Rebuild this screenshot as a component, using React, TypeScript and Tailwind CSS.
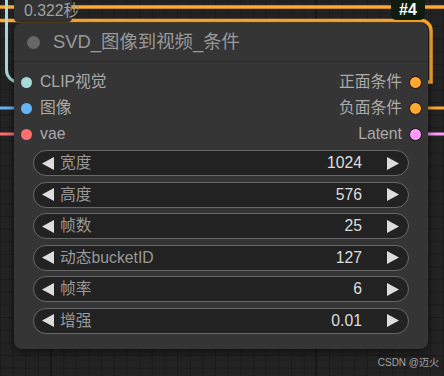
import React from "react";

const FONT = { fontFamily: '"Liberation Sans", Arial, "Noto Sans CJK SC", sans-serif' };

const inputs = [
  { label: "CLIP视觉", color: "#A8DADC" },
  { label: "图像", color: "#64B5F6" },
  { label: "vae", color: "#FF6E6E" },
];
const outputs = [
  { label: "正面条件", color: "#FFA931" },
  { label: "负面条件", color: "#FFA931" },
  { label: "Latent", color: "#FF9CF9" },
];
const widgets = [
  { label: "宽度", value: "1024" },
  { label: "高度", value: "576" },
  { label: "帧数", value: "25" },
  { label: "动态bucketID", value: "127" },
  { label: "帧率", value: "6" },
  { label: "增强", value: "0.01" },
];

function LeftArrow() {
  return (
    <svg width="12" height="13" viewBox="0 0 12 13" className="shrink-0">
      <polygon points="12,0 12,13 0,6.5" fill="#dddddd" />
    </svg>
  );
}
function RightArrow() {
  return (
    <svg width="12" height="13" viewBox="0 0 12 13" className="shrink-0">
      <polygon points="0,0 0,13 12,6.5" fill="#dddddd" />
    </svg>
  );
}

export default function App() {
  return (
    <div className="relative w-[444px] h-[376px] overflow-hidden bg-[#232323]" style={FONT}>
      {/* canvas grid + links */}
      <svg className="absolute inset-0" width="444" height="376">
        <defs>
          <pattern id="grid" width="12.65" height="12.65" patternUnits="userSpaceOnUse" x="0" y="0.8">
            <path d="M0.5 0 V12.65 M0 0.5 H12.65" stroke="#1b1b1b" strokeWidth="1" fill="none" />
          </pattern>
        </defs>
        <rect width="444" height="376" fill="#232323" />
        <rect width="444" height="376" fill="url(#grid)" />
        <path d="M51 0 V376 M316 0 V376" stroke="#181818" strokeWidth="2" />
        {/* links */}
        <path d="M0 7 H444" stroke="#FFA931" strokeWidth="3.5" fill="none" />
        <path d="M0 20.5 H421 A10 10 0 0 1 431 30.5 V82 H415" stroke="#FFA931" strokeWidth="3.5" fill="none" />
        <path d="M6.5 0 V70 A12 12 0 0 0 18.5 82 H26" stroke="#A8DADC" strokeWidth="3" fill="none" />
        <path d="M0 108 H26" stroke="#64B5F6" strokeWidth="3" fill="none" />
        <path d="M0 134 H26" stroke="#FF6E6E" strokeWidth="3" fill="none" />
        <path d="M415 108 H444" stroke="#FFA931" strokeWidth="3" fill="none" />
        <path d="M415 134 H444" stroke="#FF9CF9" strokeWidth="3" fill="none" />
      </svg>

      {/* execution time label */}
      <div className="absolute left-[14px] top-0 w-[58px] h-[22px] bg-[#333333] rounded-b-[4px]" />
      <div className="absolute left-[24px] top-[2px] text-[15.75px] leading-[18px] text-[#a0a0a0] whitespace-nowrap">
        0.322秒
      </div>

      {/* node id badge */}
      <div className="absolute left-[391px] top-0 w-[34px] h-[20px] bg-[#0e1d0e] rounded-b-[5px] flex items-center justify-center">
        <span className="text-white font-bold text-[16px] leading-[16px]">#4</span>
      </div>

      {/* node */}
      <div className="absolute left-[14px] top-[23px] w-[414px] h-[326px] rounded-[8px] bg-[#353535] shadow-[0_3px_8px_rgba(0,0,0,0.55)] flex flex-col">
        <div className="h-[39px] flex items-center border-b border-[#2b2b2b] shrink-0">
          <div className="ml-[13px] w-[13px] h-[13px] rounded-full bg-[#676767]" />
          <span className="ml-[13px] text-[18.4px] leading-[20px] text-[#999999] whitespace-nowrap">
            SVD_图像到视频_条件
          </span>
        </div>
        <div className="pt-[7px] flex justify-between shrink-0">
          <div className="flex flex-col">
            {inputs.map((s) => (
              <div key={s.label} className="h-[26px] flex items-center">
                <div className="ml-[7px] w-[11px] h-[11px] rounded-full" style={{ backgroundColor: s.color }} />
                <span className="ml-[8px] text-[15.75px] leading-[18px] text-[#aaaaaa]">{s.label}</span>
              </div>
            ))}
          </div>
          <div className="flex flex-col items-end">
            {outputs.map((s) => (
              <div key={s.label} className="h-[26px] flex items-center">
                <span className="mr-[7px] text-[15.75px] leading-[18px] text-[#aaaaaa]">{s.label}</span>
                <div
                  className="mr-[6px] w-[13px] h-[13px] rounded-full border border-[#111]"
                  style={{ backgroundColor: s.color }}
                />
              </div>
            ))}
          </div>
        </div>
        <div className="mt-[3px] px-[19px] flex flex-col gap-[5.5px]">
          {widgets.map((w) => (
            <div
              key={w.label}
              className="h-[26px] rounded-full bg-[#222222] border-[1.3px] border-[#676767] flex items-center pl-[8px] pr-[9px]"
            >
              <LeftArrow />
              <span className="ml-[6px] text-[15.75px] leading-[18px] text-[#999999] whitespace-nowrap">{w.label}</span>
              <span className="ml-auto mr-[25px] text-[15.75px] leading-[18px] text-[#dddddd]">{w.value}</span>
              <RightArrow />
            </div>
          ))}
        </div>
      </div>

      {/* watermark */}
      <div className="absolute right-[5px] top-[357px] text-[10px] leading-[12px] text-[#c4c4c4]/80 whitespace-nowrap">
        CSDN @迈火
      </div>
    </div>
  );
}
